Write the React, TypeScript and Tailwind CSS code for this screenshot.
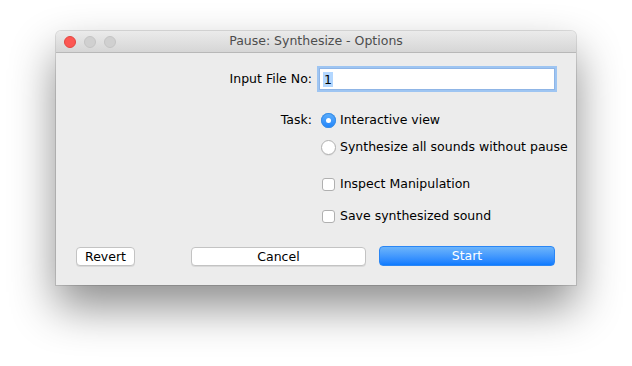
import React from "react";

const font = { fontFamily: '"DejaVu Sans", "Liberation Sans", sans-serif' };

const Radio: React.FC<{ checked?: boolean; label: string }> = ({ checked, label }) => (
  <div className="flex h-5 items-center">
    {checked ? (
      <span className="flex h-[15px] w-[15px] items-center justify-center rounded-full bg-gradient-to-b from-[#5fb0fb] to-[#1a82fb] shadow-[inset_0_0_0_1px_#3a8ee6]">
        <span className="h-[5px] w-[5px] rounded-full bg-white" />
      </span>
    ) : (
      <span className="h-[15px] w-[15px] rounded-full border border-[#b0b0b0] bg-white shadow-[0_1px_0_rgba(0,0,0,0.06)]" />
    )}
    <span className="ml-[4px] text-[12.5px] text-black">{label}</span>
  </div>
);

const Check: React.FC<{ label: string }> = ({ label }) => (
  <div className="flex h-5 items-center">
    <span className="ml-[1px] h-[13px] w-[13px] rounded-[3px] border border-[#b0b0b0] bg-white" />
    <span className="ml-[5px] text-[12.5px] text-black">{label}</span>
  </div>
);

export default function App() {
  return (
    <div className="h-[366px] w-[632px] bg-white pl-[56px] pt-[31px]" style={font}>
      <div className="w-[520px] overflow-hidden rounded-t-[5px] bg-[#ececec] shadow-[0_0_0_1px_rgba(0,0,0,0.12),0_22px_45px_rgba(0,0,0,0.45)]">
        <div className="relative flex h-[22px] items-center border-b border-[#b8b8b8] bg-gradient-to-b from-[#ebebeb] to-[#d6d6d6]">
          <div className="absolute left-[8px] top-[5px] flex gap-[8px]">
            <span className="h-[12px] w-[12px] rounded-full border border-[#e2463f] bg-[#fc5753]" />
            <span className="h-[12px] w-[12px] rounded-full border border-[#c4c4c4] bg-[#d0d0d0]" />
            <span className="h-[12px] w-[12px] rounded-full border border-[#c4c4c4] bg-[#d0d0d0]" />
          </div>
          <div className="w-full text-center text-[12.5px] text-[#4d4d4d]">Pause: Synthesize - Options</div>
        </div>

        <div className="flex flex-col pb-[19px] pt-[15px]">
          <div className="grid grid-cols-[263px_1fr] items-center">
            <div className="pr-[7px] text-right text-[12.5px] text-black">Input File No:</div>
            <div className="flex h-[22px] w-[236px] items-center border border-[#8fb5e6] bg-white pl-[3px] shadow-[0_0_0_2px_#9ec5f2]">
              <span className="bg-[#b3d7ff] px-[1px] text-[12.5px] leading-[15px] text-black">1</span>
            </div>
          </div>

          <div className="mt-[20px] grid grid-cols-[263px_1fr]">
            <div className="flex h-5 items-center justify-end pr-[7px] text-[12.5px] text-black">Task:</div>
            <div className="flex flex-col gap-[7px] pl-[2px]">
              <Radio checked label="Interactive view" />
              <Radio label="Synthesize all sounds without pause" />
            </div>
          </div>

          <div className="mt-[17px] flex flex-col gap-[12px] pl-[265px]">
            <Check label="Inspect Manipulation" />
            <Check label="Save synthesized sound" />
          </div>

          <div className="mt-[20px] flex items-center pl-[20px] text-[12.5px]">
            <button className="h-[19px] w-[59px] rounded-[4px] border border-[#c3c3c3] bg-white text-black shadow-[0_1px_0_rgba(0,0,0,0.08)]">
              Revert
            </button>
            <button className="ml-[56px] h-[19px] w-[175px] rounded-[4px] border border-[#c3c3c3] bg-white text-black shadow-[0_1px_0_rgba(0,0,0,0.08)]">
              Cancel
            </button>
            <button className="ml-[13px] h-[20px] w-[176px] rounded-[4px] border border-[#2a86f5] bg-gradient-to-b from-[#6cb4fa] to-[#0b7bff] text-white">
              Start
            </button>
          </div>
        </div>
      </div>
    </div>
  );
}
